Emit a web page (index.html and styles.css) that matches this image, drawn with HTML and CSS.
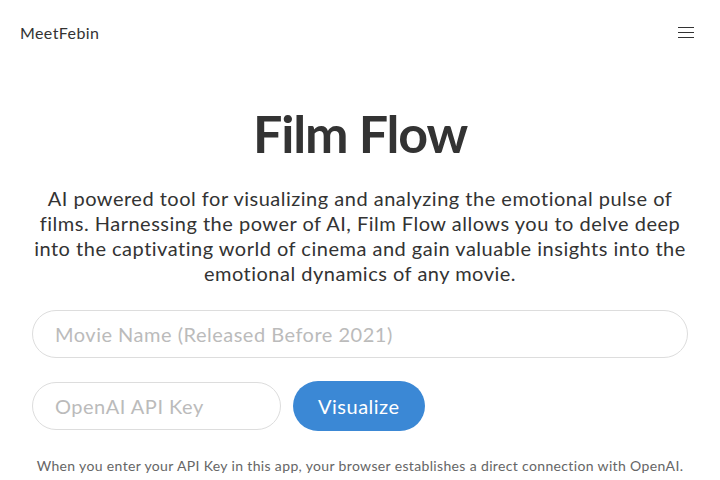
FILE: index.html
```html
<!DOCTYPE html>
<html lang="en">
<head>
    <meta charset="UTF-8">
    <meta name="viewport" content="width=device-width, initial-scale=1.0">
    <title>Film Flow</title>
    <link rel="stylesheet" href="styles.css">
</head>
<body>
    <header class="navbar">
        <a class="brand" href="#">MeetFebin</a>
        <button class="menu-btn" aria-label="Menu">
            <span></span>
            <span></span>
            <span></span>
        </button>
    </header>

    <main class="container">
        <h1>Film Flow</h1>
        <p class="intro">AI powered tool for visualizing and analyzing the emotional pulse of films. Harnessing the power of AI, Film Flow allows you to delve deep into the captivating world of cinema and gain valuable insights into the emotional dynamics of any movie.</p>

        <form class="search-form">
            <input type="text" class="field field-wide" placeholder="Movie Name (Released Before 2021)">
            <div class="form-row">
                <input type="password" class="field field-key" placeholder="OpenAI API Key">
                <button type="submit" class="btn">Visualize</button>
            </div>
        </form>

        <p class="note">When you enter your API Key in this app, your browser establishes a direct connection with OpenAI.</p>
    </main>
</body>
</html>
```

FILE: styles.css
```css
body {
    font-family: Lato, "Open Sans", sans-serif;
    background-color: #fff;
    color: #333;
    margin: 0;
}
.navbar {
    display: flex;
    justify-content: space-between;
    align-items: center;
    height: 64px;
    padding: 0 26px 0 20px;
}
.brand {
    color: #333;
    text-decoration: none;
    font-size: 16px;
    letter-spacing: 0.4px;
}
.menu-btn {
    display: flex;
    flex-direction: column;
    gap: 4px;
    background: none;
    border: none;
    padding: 0;
    width: 16px;
    cursor: pointer;
}
.menu-btn span {
    display: block;
    height: 1px;
    background-color: #333;
}
.container {
    padding: 0 32px;
    text-align: center;
}
h1 {
    font-size: 52px;
    font-weight: 700;
    letter-spacing: -1.2px;
    margin: 38px 0 22px;
    line-height: 1.2;
}
.intro {
    font-size: 20px;
    line-height: 25px;
    letter-spacing: 0.5px;
    margin: 0 0 24px;
}
.search-form {
    display: flex;
    flex-direction: column;
    gap: 23px;
}
.field {
    font-family: inherit;
    font-size: 20px;
    letter-spacing: 0.5px;
    color: #333;
    height: 48px;
    box-sizing: border-box;
    border: 1px solid #ddd;
    border-radius: 24px;
    padding: 0 22px;
    outline: none;
}
.field::placeholder {
    color: #bbb;
}
.form-row {
    display: flex;
    align-items: center;
    gap: 12px;
}
.field-key {
    width: 249px;
}
.btn {
    font-family: inherit;
    font-size: 20px;
    letter-spacing: 0.5px;
    color: #fff;
    background-color: #3b88d5;
    border: none;
    border-radius: 25px;
    height: 50px;
    padding: 0 25px;
    cursor: pointer;
}
.note {
    font-size: 14px;
    letter-spacing: 0.35px;
    color: #666;
    margin: 26px 0 0;
}
```
